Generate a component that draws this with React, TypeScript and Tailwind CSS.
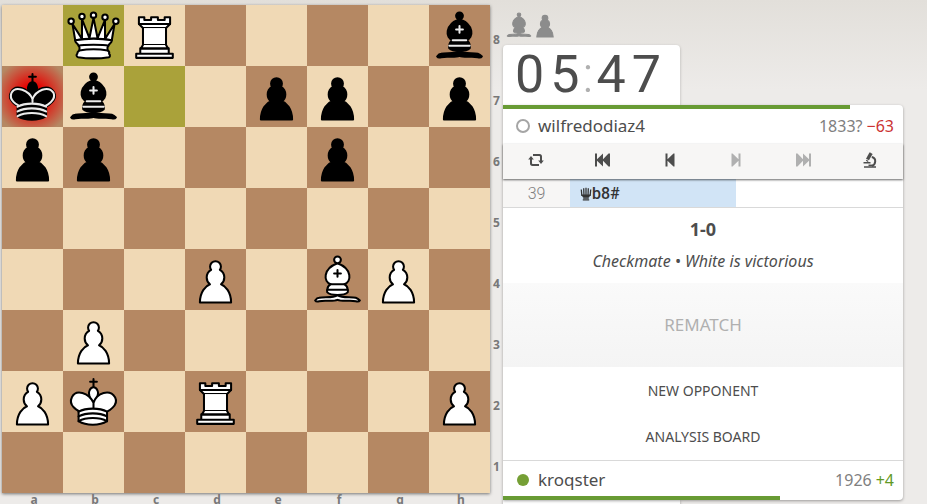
import React from 'react';
import clsx from 'clsx';

type Color = 'white' | 'black';
type Role = 'king' | 'queen' | 'rook' | 'bishop' | 'pawn';

interface Piece {
  color: Color;
  role: Role;
}

const FILES = ['a', 'b', 'c', 'd', 'e', 'f', 'g', 'h'];
const RANKS = [8, 7, 6, 5, 4, 3, 2, 1];

const LAST_MOVE = ['b8', 'c7'];
const CHECK = 'a7';

const PIECES: Record<string, Piece> = {
  b8: { color: 'white', role: 'queen' },
  c8: { color: 'white', role: 'rook' },
  h8: { color: 'black', role: 'bishop' },
  a7: { color: 'black', role: 'king' },
  b7: { color: 'black', role: 'bishop' },
  e7: { color: 'black', role: 'pawn' },
  f7: { color: 'black', role: 'pawn' },
  h7: { color: 'black', role: 'pawn' },
  a6: { color: 'black', role: 'pawn' },
  b6: { color: 'black', role: 'pawn' },
  f6: { color: 'black', role: 'pawn' },
  d4: { color: 'white', role: 'pawn' },
  f4: { color: 'white', role: 'bishop' },
  g4: { color: 'white', role: 'pawn' },
  b3: { color: 'white', role: 'pawn' },
  a2: { color: 'white', role: 'pawn' },
  b2: { color: 'white', role: 'king' },
  d2: { color: 'white', role: 'rook' },
  h2: { color: 'white', role: 'pawn' },
};

const PAWN =
  'M22.5 9c-2.21 0-4 1.79-4 4 0 .89.29 1.71.78 2.38C17.33 16.5 16 18.59 16 21c0 2.03.94 3.84 2.41 5.03-3 1.06-7.41 5.55-7.41 13.47h23c0-7.92-4.41-12.41-7.41-13.47 1.47-1.19 2.41-3 2.41-5.03 0-2.41-1.33-4.5-3.28-5.62.49-.67.78-1.49.78-2.38 0-2.21-1.79-4-4-4z';
const BISHOP_BASE =
  'M9 36c3.39-.97 10.11.43 13.5-2 3.39 2.43 10.11 1.03 13.5 2 0 0 1.65.54 3 2-.68.97-1.65.99-3 .5-3.39-.97-10.11.46-13.5-1-3.39 1.46-10.11.03-13.5 1-1.354.49-2.323.47-3-.5 1.354-1.94 3-2 3-2z';
const BISHOP_BODY =
  'M15 32c2.5 2.5 12.5 2.5 15 0 .5-1.5 0-2 0-2 0-2.5-2.5-4-2.5-4 5.5-1.5 6-11.5-5-15.5-11 4-10.5 14-5 15.5 0 0-2.5 1.5-2.5 4 0 0-.5.5 0 2z';
const BISHOP_HEAD = 'M25 8a2.5 2.5 0 1 1-5 0 2.5 2.5 0 1 1 5 0z';

const PieceIcon: React.FC<Piece> = ({ color, role }) => {
  const fill = color === 'white' ? '#fff' : '#000';
  const detail = color === 'white' ? '#000' : '#ececec';

  return (
    <svg
      viewBox="0 0 45 45"
      className="w-full h-full"
      fill={fill}
      stroke="#000"
      strokeWidth="1.5"
      strokeLinecap="round"
      strokeLinejoin="round"
      aria-label={`${color} ${role}`}
    >
      {role === 'pawn' && <path d={PAWN} />}

      {role === 'bishop' && (
        <>
          <path d={BISHOP_BASE} />
          <path d={BISHOP_BODY} />
          <path d={BISHOP_HEAD} />
          <path d="M17.5 26h10M15 30h15m-7.5-14.5v5M20 18h5" fill="none" stroke={detail} strokeLinejoin="miter" />
        </>
      )}

      {role === 'rook' && (
        <>
          <path d="M9 39h27v-3H9v3zm3-3v-4h21v4H12zm-1-22V9h4v2h5V9h5v2h5V9h4v5" strokeLinecap="butt" />
          <path d="M34 14l-3 3H14l-3-3" />
          <path d="M31 17v12.5H14V17" strokeLinecap="butt" strokeLinejoin="miter" />
          <path d="M31 29.5l1.5 2.5h-20l1.5-2.5" />
          <path d="M11 14h23" fill="none" strokeLinejoin="miter" />
        </>
      )}

      {role === 'queen' && (
        <>
          <path d="M8 12a2 2 0 1 1-4 0 2 2 0 1 1 4 0zm16.5-4.5a2 2 0 1 1-4 0 2 2 0 1 1 4 0zM41 12a2 2 0 1 1-4 0 2 2 0 1 1 4 0zM16 8.5a2 2 0 1 1-4 0 2 2 0 1 1 4 0zM33 9a2 2 0 1 1-4 0 2 2 0 1 1 4 0z" />
          <path d="M9 26c8.5-1.5 21-1.5 27 0l2-12-7 11V11l-5.5 13.5-3-15-3 15-5.5-14V25L7 14l2 12z" strokeLinecap="butt" />
          <path
            d="M9 26c0 2 1.5 2 2.5 4 1 1.5 1 1 .5 3.5-1.5 1-1.5 2.5-1.5 2.5-1.5 1.5.5 2.5.5 2.5 6.5 1 16.5 1 23 0 0 0 1.5-1 0-2.5 0 0 .5-1.5-1-2.5-.5-2.5-.5-2 .5-3.5 1-2 2.5-2 2.5-4-8.5-1.5-18.5-1.5-27 0z"
            strokeLinecap="butt"
          />
          <path d="M11.5 30c3.5-1 18.5-1 22 0M12 33.5c6-1 15-1 21 0" fill="none" />
        </>
      )}

      {role === 'king' && (
        <>
          <path d="M22.5 11.63V6M20 8h5" strokeLinejoin="miter" />
          <path
            d="M22.5 25s4.5-7.5 3-10.5c0 0-1-2.5-3-2.5s-3 2.5-3 2.5c-1.5 3 3 10.5 3 10.5"
            strokeLinecap="butt"
            strokeLinejoin="miter"
          />
          <path d="M11.5 37c5.5 3.5 15.5 3.5 21 0v-7s9-4.5 6-10.5c-4-6.5-13.5-3.5-16 4V27v-3.5c-3.5-7.5-13-10.5-16-4-3 6 5 10 5 10V37z" />
          {color === 'black' && (
            <path
              d="M32 29.5s8.5-4 6.03-9.65C34.15 14 25 18 22.5 24.5l.01 2.1-.01-2.1C20 18 9.906 14 6.997 19.85c-2.497 5.65 4.853 9 4.853 9"
              fill="none"
              stroke={detail}
            />
          )}
          <path
            d="M11.5 30c5.5-3 15.5-3 21 0m-21 3.5c5.5-3 15.5-3 21 0m-21 3.5c5.5-3 15.5-3 21 0"
            fill="none"
            stroke={detail}
          />
        </>
      )}
    </svg>
  );
};

const Board: React.FC = () => (
  <div className="grid grid-cols-8 aspect-square shadow-[0_1px_3px_rgba(0,0,0,0.5)]">
    {RANKS.map((rank, y) =>
      FILES.map((file, x) => {
        const key = `${file}${rank}`;
        const piece = PIECES[key];
        return (
          <div
            key={key}
            className={clsx(
              'aspect-square',
              LAST_MOVE.includes(key) ? 'bg-[#aaa23a]' : (x + y) % 2 === 0 ? 'bg-[#f0d9b5]' : 'bg-[#b58863]'
            )}
          >
            <div
              className={clsx(
                'w-full h-full',
                key === CHECK &&
                  'bg-[radial-gradient(ellipse_at_center,rgba(255,0,0,1)_0%,rgba(231,0,0,1)_25%,rgba(169,0,0,0)_89%,rgba(158,0,0,0)_100%)]'
              )}
            >
              {piece && <PieceIcon color={piece.color} role={piece.role} />}
            </div>
          </div>
        );
      })
    )}
  </div>
);

// Replay controls
const FlipIcon = () => (
  <svg viewBox="0 0 16 16" className="w-4 h-4" fill="currentColor">
    <path d="M5 2h6.500c1.700 0 2.500.9 2.500 2.500V6h-2V4.700c0-.5-.2-.7-.7-.7H5z" />
    <path d="M11 14H4.500C2.800 14 2 13.100 2 11.500V7h2v4.300c0 .5.200.7.700.7H11z" />
    <path d="M3 4L.2 7.500h5.600zM13 12l-2.800-3.500h5.600z" />
    <path d="M12 6h2v3h-2z" />
  </svg>
);

const FirstIcon = () => (
  <svg viewBox="0 0 16 14" className="w-4 h-3.5" fill="currentColor">
    <path d="M0 .5h2v5.800L8 .5v5.800L13.500.5H15v13h-1.500L8 7.700v5.800L2 7.700v5.800H0z" />
  </svg>
);

const PrevIcon = () => (
  <svg viewBox="0 0 10 14" className="w-2.5 h-3.5" fill="currentColor">
    <path d="M.5.5h2v5.800L8.500.5h1v13h-1l-6-5.800v5.800h-2z" />
  </svg>
);

const NextIcon = () => (
  <svg viewBox="0 0 10 14" className="w-2.5 h-3.5" fill="currentColor">
    <path d="M9.500.5h-2v5.800L1.500.5h-1v13h1l6-5.800v5.800h2z" />
  </svg>
);

const LastIcon = () => (
  <svg viewBox="0 0 16 14" className="w-4 h-3.5" fill="currentColor">
    <path d="M16 .5h-2v5.800L8 .5v5.800L2.500.5H1v13h1.500L8 7.700v5.800l6-5.800v5.800h2z" />
  </svg>
);

const MicroscopeIcon = () => (
  <svg viewBox="0 0 16 16" className="w-4 h-4" fill="none" stroke="currentColor">
    <path d="M8.800 1.700L5.500 7.500" strokeWidth="3.400" />
    <path d="M7.500.8l2.800 1.600" strokeWidth="1.200" />
    <path d="M4.200 8.200l2 1.200" strokeWidth="1.200" />
    <path d="M9.800 5c2.400.6 3.600 2.200 3.400 4.500-.1 2-1.200 3.600-3.200 4.600" strokeWidth="2" />
    <path d="M1.500 10.700h7M2 15h12" strokeWidth="1.500" />
    <path d="M6.500 13.300h5" strokeWidth="1.500" />
  </svg>
);

const CONTROLS = [
  { label: 'Flip board', icon: <FlipIcon />, disabled: false },
  { label: 'First move', icon: <FirstIcon />, disabled: false },
  { label: 'Previous move', icon: <PrevIcon />, disabled: false },
  { label: 'Next move', icon: <NextIcon />, disabled: true },
  { label: 'Last move', icon: <LastIcon />, disabled: true },
  { label: 'Analysis', icon: <MicroscopeIcon />, disabled: false },
];

// Small queen used in front of the move text
const QueenFigurine = () => (
  <svg viewBox="0 0 12 14" className="w-3 h-3.5" fill="none" stroke="currentColor">
    <path d="M1.300 2.500l.6 6.500M3.700 1.200l.3 7.800M8.300 1.200L8 9M10.700 2.500l-.6 6.500M6 .8V9" strokeWidth="1.300" />
    <path d="M1.300 7.500h9.400l-1.500 2.700H2.800z" fill="currentColor" stroke="none" />
    <path d="M3.200 11h5.600M2.800 12.800h6.400" strokeWidth="1.300" />
  </svg>
);

interface PlayerProps {
  name: string;
  rating: string;
  diff: string;
  online: boolean;
}

const Player: React.FC<PlayerProps> = ({ name, rating, diff, online }) => (
  <div className="flex items-center h-[33px] pl-2 pr-[9px] text-base">
    <span className="flex justify-center w-6 mr-[3px]">
      <span
        className={clsx('rounded-full', online ? 'w-3 h-3 bg-[#759f35]' : 'w-3.5 h-3.5 border-2 border-[#a5a5a5]')}
      />
    </span>
    <a href="#" className="flex-1 text-[17px] text-[#4d4d4d]">{name}</a>
    <span className="text-[#808080]">{rating}</span>
    <span className={clsx('ml-1', online ? 'text-[#629924]' : 'text-[#cc3333]')}>{diff}</span>
  </div>
);

const Coords: React.FC = () => (
  <div className="grid grid-rows-8 aspect-[13/488] w-[13px] text-xs font-bold text-[#787878]">
    {RANKS.map(rank => (
      <span key={rank} className="flex items-center justify-center pt-[9px]">{rank}</span>
    ))}
  </div>
);

const Clock: React.FC<{ minutes: string; seconds: string }> = ({ minutes, seconds }) => (
  <div className="flex items-center w-[177px] h-[60px] pl-3 bg-white rounded-t-sm shadow-[0_1px_3px_rgba(0,0,0,0.25)] font-['Roboto',sans-serif] text-[52px] leading-none">
    <span className="flex gap-1.5">
      {minutes.split('').map((digit, i) => (
        <span key={i}>{digit}</span>
      ))}
    </span>
    <span className="px-[3px] font-light text-[#b0b0b0]">:</span>
    <span className="flex gap-1.5">
      {seconds.split('').map((digit, i) => (
        <span key={i}>{digit}</span>
      ))}
    </span>
  </div>
);

const App: React.FC = () => {
  return (
    <div className="h-screen overflow-hidden pt-[5px] pl-0.5 pr-6 bg-[#edebe9] bg-[linear-gradient(to_bottom,#e2dfda,#edebe9_90px)] font-['Noto_Sans',sans-serif] text-[#4d4d4d]">
      <main className="grid grid-cols-[minmax(0,488px)_13px_minmax(0,400px)]">
        <div>
          <Board />
          <div className="grid grid-cols-8 text-xs leading-[14px] font-bold text-[#787878] text-center">
            {FILES.map(file => (
              <span key={file} className="pl-[3px]">{file}</span>
            ))}
          </div>
        </div>

        <Coords />

        <div className="flex flex-col">
          <div className="flex items-end h-10 pb-1">
            {/* Captured material */}
            <svg viewBox="0 0 45 45" className="w-8 h-8" fill="#8c8c8c" stroke="#8c8c8c" strokeWidth="1.5">
              <path d={BISHOP_BASE} />
              <path d={BISHOP_BODY} />
              <path d={BISHOP_HEAD} />
            </svg>
            <svg viewBox="0 0 45 45" className="w-8 h-8 -ml-1.5" fill="#8c8c8c" stroke="#8c8c8c" strokeWidth="1.5">
              <path d={PAWN} />
            </svg>
          </div>

          <Clock minutes="05" seconds="47" />

          <div className="relative bg-white rounded-r-sm shadow-[0_1px_3px_rgba(0,0,0,0.35)]">
            <div className="h-1">
              <div className="h-full bg-[#689b34]" style={{ width: '86.75%' }} />
            </div>
            <div className="pb-0.5">
              <Player name="wilfredodiaz4" rating="1833?" diff="−63" online={false} />
            </div>

            <div className="relative grid grid-cols-6 h-[35px] pb-1 bg-[#f7f6f5] shadow-[0_1px_2px_rgba(0,0,0,0.6)]">
              {CONTROLS.map(control => (
                <button
                  key={control.label}
                  aria-label={control.label}
                  disabled={control.disabled}
                  className="flex items-center justify-center disabled:text-[#b0b0b0]"
                >
                  {control.icon}
                </button>
              ))}
            </div>

            <div className="flex h-[29px] border-b border-[#d9d9d9] font-['Roboto',sans-serif] text-base">
              <div className="flex items-center justify-center w-[67px] pt-0.5 bg-[#f7f6f5] font-light text-[#808080]">39</div>
              <button className="flex items-center w-1/2 max-w-[166px] pt-0.5 pl-2.5 bg-[#d1e4f6] font-medium text-[#333]">
                <QueenFigurine />
                b8#
              </button>
            </div>

            <div className="pt-[7px] pb-2 text-center">
              <p className="text-lg leading-7 font-bold">1-0</p>
              <p className="pt-1 text-base leading-7 italic">Checkmate • White is victorious</p>
            </div>

            <button
              disabled
              className="block w-full h-[84px] bg-[linear-gradient(to_bottom,#fafafa,#f4f4f4)] text-[17px] text-[#b0b0b0]"
            >
              REMATCH
            </button>
            <div className="pt-px">
              <button className="block w-full h-[46px] text-sm">NEW OPPONENT</button>
              <button className="block w-full h-[46px] text-sm">ANALYSIS BOARD</button>
            </div>

            <div className="border-t border-[#d9d9d9] pt-0.5">
              <Player name="kroqster" rating="1926" diff="+4" online />
            </div>
            <div className="h-1">
              <div className="h-full bg-[#689b34]" style={{ width: '69.25%' }} />
            </div>
          </div>

          <div className="w-[177px] h-[60px] bg-white rounded-b-sm shadow-[0_1px_3px_rgba(0,0,0,0.35)]" />
        </div>
      </main>
    </div>
  );
};

export default App;
